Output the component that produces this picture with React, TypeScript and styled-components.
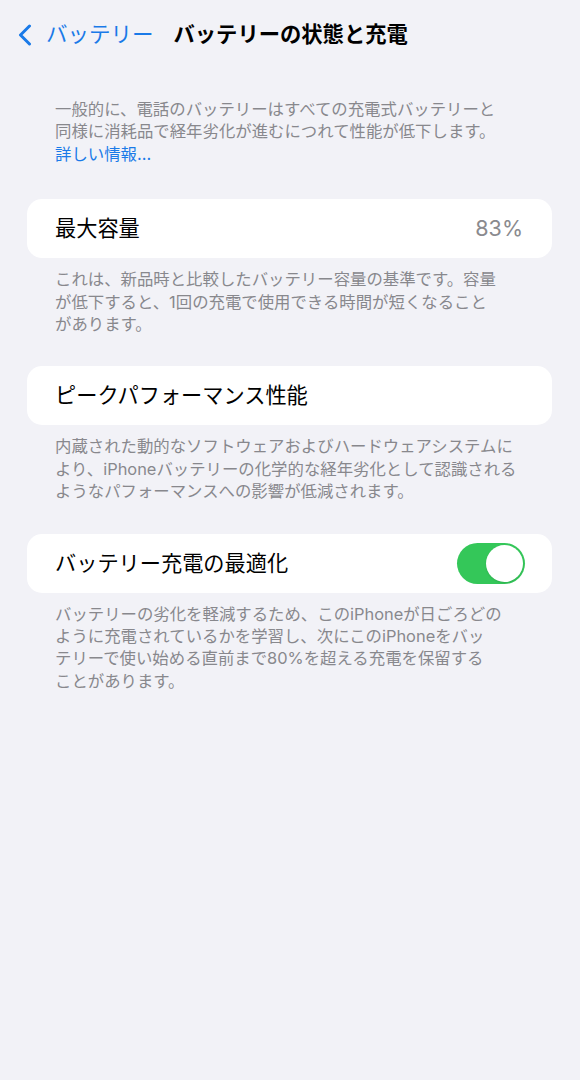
import * as React from 'react';
import styled, { createGlobalStyle } from 'styled-components';

const GlobalStyle = createGlobalStyle`
  html, body {
    margin: 0;
    padding: 0;
    background: #f2f2f7;
  }
  body {
    font-family: Inter, "Noto Sans CJK JP", sans-serif;
    -webkit-font-smoothing: antialiased;
  }
`;

const Page = styled.div`
  min-height: 1080px;
  background: #f2f2f7;
  color: #000;
`;

const NavBar = styled.header`
  display: flex;
  align-items: center;
  height: 70px;
  padding-left: 17px;
`;

const BackButton = styled.button`
  display: flex;
  align-items: center;
  gap: 13px;
  border: 0;
  padding: 0;
  background: none;
  color: #1a7ae8;
  font-family: inherit;
  font-size: 21.5px;
  line-height: 1;
  cursor: pointer;
`;

const Title = styled.h1`
  margin: 0 0 0 20px;
  font-size: 21.3px;
  font-weight: 700;
  line-height: 1;
`;

const Note = styled.p<{ $top: number }>`
  margin: ${(p) => p.$top}px 0 0;
  padding: 0 30px 0 55px;
  font-size: 16.4px;
  line-height: 22.4px;
  color: #88888d;
`;

const Link = styled.a`
  color: #1a7ae8;
  text-decoration: none;
`;

const Section = styled.section<{ $top?: number }>`
  margin-top: ${(p) => p.$top ?? 31}px;
`;

const Card = styled.div`
  display: flex;
  align-items: center;
  justify-content: space-between;
  height: 59px;
  margin: 0 28px 0 27px;
  padding: 0 27px 0 28px;
  background: #fff;
  border-radius: 15px;
`;

const Label = styled.span`
  font-size: 21.2px;
  line-height: 1;
`;

const Value = styled.span`
  font-size: 21.5px;
  line-height: 1;
  color: #8a8a8e;
  margin-right: 2px;
`;

const Toggle = styled.span<{ $on: boolean }>`
  display: flex;
  justify-content: ${(p) => (p.$on ? 'flex-end' : 'flex-start')};
  align-items: center;
  box-sizing: border-box;
  width: 68px;
  height: 41px;
  padding: 2px;
  border-radius: 21px;
  background: ${(p) => (p.$on ? '#34c759' : '#e9e9eb')};
  cursor: pointer;
`;

const Knob = styled.span`
  width: 37px;
  height: 37px;
  border-radius: 50%;
  background: #fff;
  box-shadow: 0 1px 2px rgba(0, 0, 0, 0.12);
`;

const Chevron = () => (
  <svg width="16" height="22" viewBox="0 0 16 22" fill="none">
    <path
      d="M12.5 2 L3.5 11 L12.5 20"
      stroke="#1a7ae8"
      strokeWidth="3"
      strokeLinecap="round"
      strokeLinejoin="round"
    />
  </svg>
);

// footer copy keeps the same line breaks as the settings app
const lines = (text: string[]) =>
  text.map((t, i) => (
    <React.Fragment key={i}>
      {i > 0 && <br />}
      {t}
    </React.Fragment>
  ));

export default function App() {
  const [optimized, setOptimized] = React.useState(true);

  return (
    <Page>
      <GlobalStyle />
      <NavBar>
        <BackButton>
          <Chevron />
          バッテリー
        </BackButton>
        <Title>バッテリーの状態と充電</Title>
      </NavBar>

      <Note $top={28}>
        {lines([
          '一般的に、電話のバッテリーはすべての充電式バッテリーと',
          '同様に消耗品で経年劣化が進むにつれて性能が低下します。',
        ])}
        <br />
        <Link href="#">詳しい情報...</Link>
      </Note>

      <Section $top={34}>
        <Card>
          <Label>最大容量</Label>
          <Value>83%</Value>
        </Card>
        <Note $top={10}>
          {lines([
            'これは、新品時と比較したバッテリー容量の基準です。容量',
            'が低下すると、1回の充電で使用できる時間が短くなること',
            'があります。',
          ])}
        </Note>
      </Section>

      <Section>
        <Card>
          <Label>ピークパフォーマンス性能</Label>
        </Card>
        <Note $top={10}>
          {lines([
            '内蔵された動的なソフトウェアおよびハードウェアシステムに',
            'より、iPhoneバッテリーの化学的な経年劣化として認識される',
            'ようなパフォーマンスへの影響が低減されます。',
          ])}
        </Note>
      </Section>

      <Section>
        <Card>
          <Label>バッテリー充電の最適化</Label>
          <Toggle $on={optimized} onClick={() => setOptimized(!optimized)}>
            <Knob />
          </Toggle>
        </Card>
        <Note $top={10}>
          {lines([
            'バッテリーの劣化を軽減するため、このiPhoneが日ごろどの',
            'ように充電されているかを学習し、次にこのiPhoneをバッ',
            'テリーで使い始める直前まで80%を超える充電を保留する',
            'ことがあります。',
          ])}
        </Note>
      </Section>
    </Page>
  );
}
